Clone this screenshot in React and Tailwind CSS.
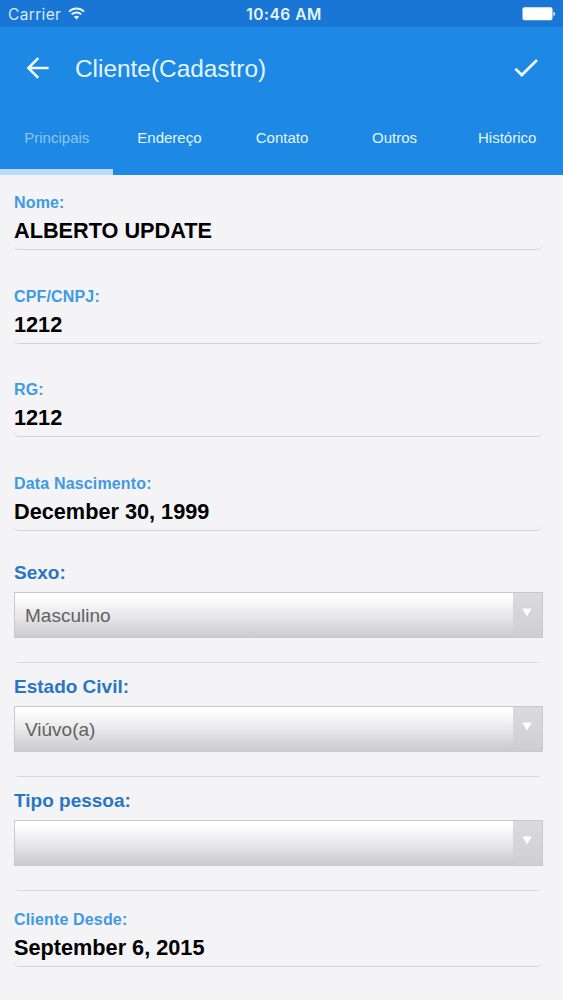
import { useState } from 'react'

const tabs = ['Principais', 'Endereço', 'Contato', 'Outros', 'Histórico']

function StatusBar() {
  return (
    <div className="grid grid-cols-3 items-center h-[27px] bg-[#1976d5] pt-[2px] pl-[8px] pr-[7px] font-['Inter',sans-serif] text-white">
      <div className="flex items-center gap-[7px]">
        <span className="text-[15.5px] leading-none tracking-[0.35px] text-[#d6ecff]">Carrier</span>
        <svg className="-mt-[2px]" width="17" height="13" viewBox="0 0 17 13" fill="none" stroke="#e6f5ff" strokeWidth="2">
          <path d="M1 4.6C5.2 .4 11.8 .4 16 4.6" />
          <path d="M3.7 7.4c2.7-2.6 6.9-2.6 9.6 0" />
          <path d="M8.5 12.4 5.9 9.7c1.5-1.3 3.7-1.3 5.2 0z" fill="#e6f5ff" stroke="none" />
        </svg>
      </div>
      <span className="pl-[4px] text-center text-[15.5px] leading-none font-semibold tracking-[0.5px] whitespace-nowrap text-[#e6f5ff]">10:46 AM</span>
      <div className="flex justify-end">
        <svg className="-mt-[1px]" width="34" height="14" viewBox="0 0 34 14" fill="#fff">
          <rect x="0.5" y="0.3" width="30" height="13" rx="2" />
          <path d="M31.5 4.8c2 .6 2 3.6 0 4.2z" />
        </svg>
      </div>
    </div>
  )
}

function Header({ active, onChange }) {
  return (
    <header className="flex flex-col h-[148px] bg-[#1e88e5] text-[#e3f5ff]">
      <div className="flex items-center h-[82px] pl-[26px] pr-[24px]">
        <button className="w-[24px] h-[24px]">
          <svg width="24" height="24" viewBox="0 0 24 24" fill="none" stroke="#f2faff" strokeWidth="2.6">
            <path d="M22.6 12H3M12.2 2.2 2.4 12l9.8 9.8" />
          </svg>
        </button>
        <h1 className="ml-[25px] flex-1 pt-[1px] text-[24.4px] leading-[30px]">Cliente(Cadastro)</h1>
        <button className="w-[26px] h-[20px]">
          <svg width="26" height="20" viewBox="0 0 26 20" fill="none" stroke="#f2faff" strokeWidth="2.7">
            <path d="M2.4 10.8 8.8 17 24 2" />
          </svg>
        </button>
      </div>
      <nav className="flex flex-1">
        {tabs.map(tab => (
          <button key={tab} onClick={() => onChange(tab)}
            className={`flex-1 basis-0 text-[15px] pl-[1px] pb-[1px] border-b-[6px] ${active === tab ? 'text-[#8ec5f5] border-[#bbdbf9]' : 'border-transparent'}`}>
            {tab}
          </button>
        ))}
      </nav>
    </header>
  )
}

function Field({ label, value }) {
  return (
    <div className="h-[75px] pt-[18px] pr-[21px] pl-[14px] font-bold">
      <div className="text-[16px] leading-[20px] tracking-[0.16px] text-[#3d9ae3]">{label}</div>
      <div className="mt-[5px] h-[32px] text-[21.7px] leading-[26px] text-black border-b border-[#d4d3d6] rounded-b-[5px]">{value}</div>
    </div>
  )
}

function SelectField({ label, value }) {
  return (
    <div className="h-[114px] pl-[14px] pr-[20px]">
      <div className="h-[44px] pt-[14px] text-[19px] leading-[22px] font-bold text-[#2876c4]">{label}</div>
      <div className="flex h-[46px] border border-[#c9c8ca] bg-linear-to-b from-white from-10% via-[#e6e5e7] via-55% to-[#cbcacc]">
        <div className="flex-1 pl-[10px] text-[19px] leading-[45px] text-[#626163]">{value}</div>
        <div className="flex justify-center w-[29px] pt-[15px] bg-linear-to-b from-[#dbdadc] to-[#cfced0]">
          <svg className="-ml-[1px]" width="10" height="9" viewBox="0 0 10 9">
            <path d="M.3 .5h9.4L5 8.5z" fill="#fff" />
          </svg>
        </div>
      </div>
      <div className="mt-[24px] ml-[3px] mr-[4px] h-px bg-[#d9d8db]" />
    </div>
  )
}

export default function App() {
  const [active, setActive] = useState('Principais')

  return (
    <div className="flex flex-col w-[563px] h-[1000px] overflow-hidden bg-[#f4f3f6] font-['Liberation_Sans',Arial,sans-serif]">
      <StatusBar />
      <Header active={active} onChange={setActive} />
      <main className="flex flex-col">
        <div className="flex flex-col gap-[18.7px]">
          <Field label="Nome:" value="ALBERTO UPDATE" />
          <Field label="CPF/CNPJ:" value="1212" />
          <Field label="RG:" value="1212" />
          <Field label="Data Nascimento:" value="December 30, 1999" />
        </div>
        <div className="mt-[17px] mb-[2px]">
          <SelectField label="Sexo:" value="Masculino" />
          <SelectField label="Estado Civil:" value="Viúvo(a)" />
          <SelectField label="Tipo pessoa:" value="" />
        </div>
        <Field label="Cliente Desde:" value="September 6, 2015" />
      </main>
    </div>
  )
}
